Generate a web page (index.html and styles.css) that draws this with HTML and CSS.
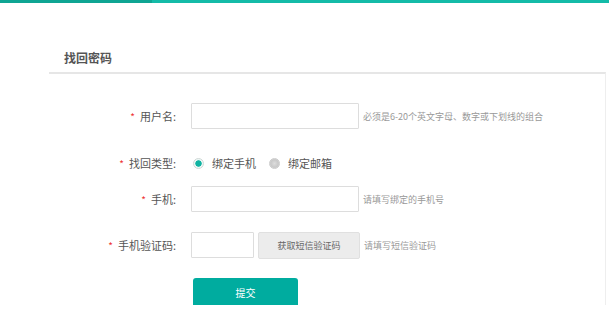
FILE: index.html
```html
<!DOCTYPE html>
<html lang="zh-CN">
<head>
  <meta charset="UTF-8">
  <title>找回密码</title>
  <link rel="stylesheet" href="styles.css">
</head>
<body>
<div class="topbar"><div class="topbar-active"></div></div>
<div class="container">
  <h2 class="title">找回密码</h2>
  <div class="panel">
    <form action="/reset" method="post" class="form">
      <div class="row row-user">
        <label class="label" for="username"><span class="star">*</span>用户名:</label>
        <input type="text" id="username" name="username" class="input">
        <span class="hint">必须是6-20个英文字母、数字或下划线的组合</span>
      </div>
      <div class="row row-type">
        <span class="label"><span class="star">*</span>找回类型:</span>
        <label class="radio"><span class="dot checked"></span>绑定手机</label>
        <label class="radio"><span class="dot"></span>绑定邮箱</label>
      </div>
      <div class="row row-phone">
        <label class="label" for="phone"><span class="star">*</span>手机:</label>
        <input type="text" id="phone" name="phone" class="input">
        <span class="hint">请填写绑定的手机号</span>
      </div>
      <div class="row row-code">
        <label class="label" for="code"><span class="star">*</span>手机验证码:</label>
        <input type="text" id="code" name="code" class="input input-small">
        <button type="button" class="code-button">获取短信验证码</button>
        <span class="hint">请填写短信验证码</span>
      </div>
      <div class="row row-submit">
        <button type="submit" class="submit-button">提交</button>
      </div>
    </form>
  </div>
</div>
</body>
</html>
```

FILE: styles.css
```css
body {
  font-family: "Noto Sans CJK SC", "Liberation Sans", sans-serif;
  margin: 0;
  padding: 0;
  background-color: #fff;
  color: #555;
}
.topbar {
  height: 3px;
  background-color: #14bba8;
}
.topbar-active {
  width: 152px;
  height: 3px;
  background-color: #0ea593;
}
.container {
  padding-left: 49px;
}
.title {
  margin: 0;
  padding: 43px 0 0 15px;
  height: 26px;
  font-size: 12px;
  font-weight: bold;
  line-height: 24px;
  color: #555;
}
.panel {
  border-top: 2px solid #e6e6e6;
  border-right: 1px solid #eee;
  margin-right: 3px;
  height: 231px;
}
.form {
  padding-top: 29px;
}
.row {
  display: flex;
  align-items: center;
  height: 26px;
}
.row-type {
  height: 20px;
  margin-top: 24px;
}
.row-phone {
  margin-top: 13px;
}
.row-code {
  margin-top: 20px;
}
.row-submit {
  margin-top: 20px;
  height: 29px;
}
.label {
  width: 127px;
  margin-right: 15px;
  text-align: right;
  font-size: 11px;
  color: #555;
}
.star {
  color: #e33;
  font-size: 10px;
  margin-right: 5px;
}
.input {
  width: 168px;
  height: 26px;
  box-sizing: border-box;
  border: 1px solid #ddd;
  border-radius: 1px;
  padding: 0 6px;
  margin: 0;
}
.input-small {
  width: 63px;
}
.hint {
  margin-left: 4px;
  font-size: 9px;
  color: #999;
}
.radio {
  display: flex;
  align-items: center;
  font-size: 11px;
  color: #555;
  margin-right: 13px;
}
.row-type .radio:first-of-type {
  margin-left: 2px;
}
.dot {
  width: 9px;
  height: 9px;
  border-radius: 50%;
  border: 1px solid #ccc;
  background: radial-gradient(circle, #ddd 0, #c8c8c8 60%, #eee 100%);
  margin-right: 8px;
}
.dot.checked {
  background: radial-gradient(circle, #10b3a2 0, #10b3a2 45%, #e8f6f4 55%, #fff 100%);
  border-color: #cfd8d6;
}
.code-button {
  margin-left: 4px;
  width: 102px;
  height: 27px;
  border: 1px solid #e0e0e0;
  border-radius: 2px;
  background-color: #ececec;
  color: #666;
  font-family: inherit;
  font-size: 9px;
  padding: 0;
}
.submit-button {
  margin-left: 144px;
  width: 105px;
  height: 29px;
  border: none;
  border-radius: 3px;
  background-color: #00ac9f;
  color: #fff;
  font-family: inherit;
  font-size: 10px;
  cursor: pointer;
}
.submit-button:hover {
  background-color: #009a8e;
}
```
